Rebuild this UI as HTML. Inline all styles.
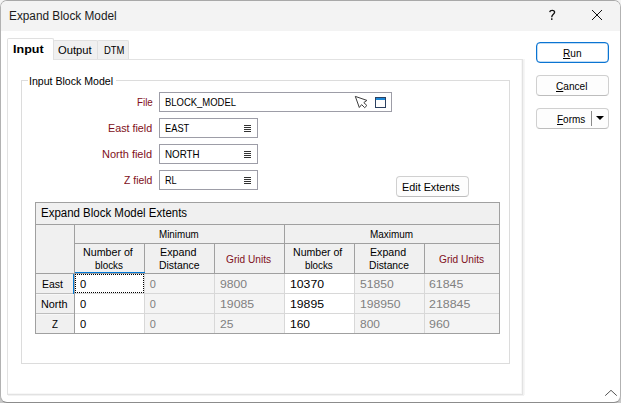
<!DOCTYPE html>
<html><head><meta charset="utf-8"><title>Expand Block Model</title>
<style>
html,body{margin:0;padding:0;}
body{width:621px;height:403px;overflow:hidden;background:linear-gradient(#f4f4f4 0,#f4f4f4 50%,#c8c8c8 100%);position:relative;font-family:"Liberation Sans",sans-serif;font-size:11px;color:#000;}
.abs,#win *{position:absolute;box-sizing:border-box;}
#win{position:absolute;box-sizing:border-box;left:0;top:0;width:621px;height:403px;border:1px solid #b2b2b2;border-top-color:#a8a8a8;border-bottom-color:#8c8c8c;border-radius:7px;background:#fff;overflow:hidden;}
#titlebar{left:0;top:0;width:619px;height:30px;background:#f3f3f3;}
/* tab control */
#page{left:6px;top:58px;width:516px;height:336px;background:#fff;border:1px solid #e2e2e2;box-shadow:1px 1px 0 #f2f2f2,2px 0 0 #f6f6f6,inset -1px -1px 0 #f7f7f7;}
.tab{background:#f0f0f0;border:1px solid #e0e0e0;border-bottom:none;border-radius:2px 2px 0 0;}
#tab1{left:6px;top:37px;width:47px;height:22px;background:#fff;border-color:#e0e0e0;border-radius:2px 2px 0 0;}
#tab2{left:52px;top:39px;width:45px;height:20px;}
#tab3{left:96px;top:39px;width:32px;height:20px;}
/* group box */
#grp{left:20px;top:79px;width:489px;height:284px;border:1px solid #dcdcdc;}
#grplabel{left:27px;top:73px;width:88px;height:14px;background:#fff;}
/* inputs */
.inp{background:#fff;border:1px solid #9d9da7;height:20px;}
#f1{left:158px;top:91px;width:233px;}
#f2{left:158px;top:117px;width:99px;}
#f3{left:158px;top:143px;width:99px;}
#f4{left:158px;top:169px;width:99px;}
.lst{width:7px;height:7px;left:83.6px;top:6px;}
/* buttons */
.btn{background:#fdfdfd;border:1px solid #d0d0d0;border-bottom-color:#bdbdbd;border-radius:4px;}
#bedit{left:395px;top:175px;width:73px;height:21px;}
#brun{left:535px;top:41px;width:73px;height:21px;border:1px solid #0a74d2;box-shadow:inset 0 0 0 0.25px #0a74d2;background:#fff;}
#bcancel{left:535px;top:74px;width:73px;height:21px;}
#bforms{left:535px;top:107px;width:73px;height:21px;}
#fdiv{left:54px;top:2px;width:1px;height:15px;background:#8a8a8a;}
/* grid */
#grid{left:34px;top:201px;width:465px;height:132px;background:#f0f0f0;border:1px solid #a0a0a0;}
.hl{background:#a0a0a0;height:1px;}
.vl{background:#a0a0a0;width:1px;}
.hl2{background:#d8d8d8;height:1px;}
.vl2{background:#d8d8d8;width:1px;}
.cellw{background:#fff;}
.blue{background:#0078d7;}
#focus{border:1px dotted #000;}
/* text */
#texts{position:absolute;left:0;top:0;width:621px;height:403px;pointer-events:none;}
.t{position:absolute;white-space:nowrap;transform-origin:0 0;line-height:normal;}
.t u{text-decoration:underline;text-underline-offset:1px;}
svg{position:absolute;overflow:visible;}

</style></head>
<body>
<div id="win">
  <div id="titlebar"></div>
  <!-- help & close glyphs -->
  <svg style="left:590px;top:8px" width="12" height="12" viewBox="0 0 12 12"><path d="M1 1 L11 11 M11 1 L1 11" stroke="#111" stroke-width="1.0" fill="none"/></svg>
  <svg style="left:545px;top:7px" width="12" height="14" viewBox="0 0 12 14"><path d="M3.7 4.1 C3.9 2.9 5.0 2.4 6.2 2.4 C7.7 2.4 8.6 3.2 8.6 4.3 C8.6 5.2 7.9 5.9 7.1 6.6 C6.2 7.4 5.75 7.9 5.75 9.3" stroke="#111" stroke-width="1.35" fill="none"/><rect x="5.0" y="10.3" width="1.5" height="1.6" fill="#111"/></svg>

  <!-- tabs -->
  <div id="tab2" class="tab"></div>
  <div id="tab3" class="tab"></div>
  <div id="page"></div>
  <div id="tab1" class="tab"></div>

  <!-- group box -->
  <div id="grp"></div>
  <div id="grplabel"></div>

  <!-- inputs -->
  <div id="f1" class="inp">
    <svg style="left:194px;top:2px" width="14" height="14" viewBox="0 0 14 14"><path d="M1.3 1.4 L12.9 5.4 L9.8 7.6 L12.9 10.5 L10.7 12.7 L7.6 9.6 L5.3 12.5 Z" fill="#fff" stroke="#3c3c3c" stroke-width="1"/></svg>
    <svg style="left:215px;top:4px" width="12" height="12" viewBox="0 0 12 12"><rect x="0.5" y="0.5" width="10" height="10" fill="#fdfdfd" stroke="#2b4060" stroke-width="1"/><rect x="1" y="1" width="9" height="2" fill="#1e88d6"/></svg>
  </div>
  <div id="f2" class="inp"><svg class="lst" viewBox="0 0 7 7"><path d="M0 0.5H7M0 2.5H7M0 4.5H7M0 6.5H7" stroke="#333" stroke-width="1"/></svg></div>
  <div id="f3" class="inp"><svg class="lst" viewBox="0 0 7 7"><path d="M0 0.5H7M0 2.5H7M0 4.5H7M0 6.5H7" stroke="#333" stroke-width="1"/></svg></div>
  <div id="f4" class="inp"><svg class="lst" viewBox="0 0 7 7"><path d="M0 0.5H7M0 2.5H7M0 4.5H7M0 6.5H7" stroke="#333" stroke-width="1"/></svg></div>

  <!-- buttons -->
  <div id="bedit" class="btn"></div>
  <div id="brun" class="btn"></div>
  <div id="bcancel" class="btn"></div>
  <div id="bforms" class="btn"><div id="fdiv"></div>
    <svg style="left:59px;top:7px" width="8" height="4" viewBox="0 0 8 4"><path d="M0 0H8L4 4Z" fill="#000"/></svg>
  </div>

  <!-- grid : coordinates relative to #grid's padding box (origin = page 35,202) -->
  <div id="grid">
    <!-- data area (disabled look) -->
    <div style="left:39px;top:71px;width:424px;height:59px;background:#f4f4f4"></div>
    <!-- white editable cells -->
    <div class="cellw" style="left:39px;top:71px;width:69px;height:59px"></div>
    <div class="cellw" style="left:249px;top:71px;width:69px;height:59px"></div>
    <!-- header lines -->
    <div class="hl" style="left:0;top:21px;width:463px"></div>
    <div class="hl" style="left:38px;top:40px;width:425px"></div>
    <div class="hl" style="left:0;top:70px;width:463px"></div>
    <div class="vl" style="left:38px;top:22px;height:108px"></div>
    <div class="vl" style="left:248px;top:22px;height:48px"></div>
    <div class="vl" style="left:108px;top:41px;height:29px"></div>
    <div class="vl" style="left:178px;top:41px;height:29px"></div>
    <div class="vl" style="left:318px;top:41px;height:29px"></div>
    <div class="vl" style="left:388px;top:41px;height:29px"></div>
    <!-- row header separators -->
    <div class="hl" style="left:0;top:90px;width:38px;background:#bdbdbd;box-shadow:0 1px 0 #f7f7f7"></div>
    <div class="hl" style="left:0;top:110px;width:38px;background:#bdbdbd;box-shadow:0 1px 0 #f7f7f7"></div>
    <!-- data lines -->
    <div class="hl2" style="left:39px;top:90px;width:424px"></div>
    <div class="hl2" style="left:39px;top:110px;width:424px"></div>
    <div class="vl2" style="left:108px;top:71px;height:59px"></div>
    <div class="vl2" style="left:178px;top:71px;height:59px"></div>
    <div class="vl2" style="left:248px;top:71px;height:59px"></div>
    <div class="vl2" style="left:318px;top:71px;height:59px"></div>
    <div class="vl2" style="left:388px;top:71px;height:59px"></div>
    <!-- selection highlights -->
    <div class="blue" style="left:39px;top:69px;width:70px;height:1px"></div>
    <div class="blue" style="left:37px;top:71px;width:1px;height:20px"></div>
    <div id="focus" style="left:39px;top:71px;width:69px;height:19px"></div>
  </div>

  <!-- resize caret bottom right -->
  <svg style="left:603px;top:388px" width="14" height="8" viewBox="0 0 14 8"><path d="M1.2 6.7 L7 1.3 L12.8 6.7" stroke="#555" stroke-width="1" fill="none"/></svg>
</div>

<div id="texts">
<span class="t" style="left:9.40px;top:9.0px;font-size:12px;color:#1b1b1b;transform:scaleX(0.9841);">Expand Block Model</span>
<span class="t" style="left:13.00px;top:43.0px;font-size:11px;color:#000;transform:scaleX(1.1391);font-weight:bold;">Input</span>
<span class="t" style="left:58.00px;top:44.0px;font-size:11px;color:#000;transform:scaleX(1.0162);">Output</span>
<span class="t" style="left:104.00px;top:44.0px;font-size:11px;color:#000;transform:scaleX(0.8579);">DTM</span>
<span class="t" style="left:29.04px;top:75.0px;font-size:11px;color:#000;transform:scaleX(0.9617);">Input Block Model</span>
<span class="t" style="left:136.50px;top:96.0px;font-size:11px;color:#800f20;transform:scaleX(0.8917);">File</span>
<span class="t" style="left:108.10px;top:122.0px;font-size:11px;color:#800f20;transform:scaleX(0.9772);">East field</span>
<span class="t" style="left:102.30px;top:148.0px;font-size:11px;color:#800f20;transform:scaleX(0.9977);">North field</span>
<span class="t" style="left:124.00px;top:174.0px;font-size:11px;color:#800f20;transform:scaleX(0.9451);">Z field</span>
<span class="t" style="left:164.70px;top:96.0px;font-size:11px;color:#000;transform:scaleX(0.8603);">BLOCK_MODEL</span>
<span class="t" style="left:164.60px;top:122.0px;font-size:11px;color:#000;transform:scaleX(0.8445);">EAST</span>
<span class="t" style="left:164.60px;top:148.0px;font-size:11px;color:#000;transform:scaleX(0.8906);">NORTH</span>
<span class="t" style="left:164.60px;top:174.0px;font-size:11px;color:#000;transform:scaleX(0.8319);">RL</span>
<span class="t" style="left:402.20px;top:181.0px;font-size:11px;color:#000;transform:scaleX(0.9832);">Edit Extents</span>
<span class="t" style="left:562.90px;top:47.0px;font-size:11px;color:#000;transform:scaleX(0.9172);"><u>R</u>un</span>
<span class="t" style="left:556.00px;top:80.0px;font-size:11px;color:#000;transform:scaleX(0.9172);"><u>C</u>ancel</span>
<span class="t" style="left:556.90px;top:113.0px;font-size:11px;color:#000;transform:scaleX(0.9064);"><u>F</u>orms</span>
<span class="t" style="left:40.60px;top:206.0px;font-size:12px;color:#000;transform:scaleX(0.9565);">Expand Block Model Extents</span>
<span class="t" style="left:158.60px;top:228.0px;font-size:11px;color:#000;transform:scaleX(0.8909);">Minimum</span>
<span class="t" style="left:369.90px;top:228.0px;font-size:11px;color:#000;transform:scaleX(0.9052);">Maximum</span>
<span class="t" style="left:83.20px;top:246.0px;font-size:11px;color:#000;transform:scaleX(0.9695);">Number of</span>
<span class="t" style="left:95.00px;top:259.0px;font-size:11px;color:#000;transform:scaleX(0.8965);">blocks</span>
<span class="t" style="left:160.00px;top:246.0px;font-size:11px;color:#000;transform:scaleX(0.9761);">Expand</span>
<span class="t" style="left:158.80px;top:259.0px;font-size:11px;color:#000;transform:scaleX(0.9466);">Distance</span>
<span class="t" style="left:225.70px;top:253.0px;font-size:11px;color:#800f20;transform:scaleX(0.9211);">Grid Units</span>
<span class="t" style="left:293.30px;top:246.0px;font-size:11px;color:#000;transform:scaleX(0.9599);">Number of</span>
<span class="t" style="left:304.90px;top:259.0px;font-size:11px;color:#000;transform:scaleX(0.8902);">blocks</span>
<span class="t" style="left:370.30px;top:246.0px;font-size:11px;color:#000;transform:scaleX(0.9680);">Expand</span>
<span class="t" style="left:368.90px;top:259.0px;font-size:11px;color:#000;transform:scaleX(0.9325);">Distance</span>
<span class="t" style="left:438.60px;top:253.0px;font-size:11px;color:#800f20;transform:scaleX(0.9231);">Grid Units</span>
<span class="t" style="left:42.20px;top:278.0px;font-size:11px;color:#000;transform:scaleX(0.9520);">East</span>
<span class="t" style="left:40.50px;top:298.0px;font-size:11px;color:#000;transform:scaleX(0.9858);">North</span>
<span class="t" style="left:51.70px;top:318.0px;font-size:11px;color:#000;transform:scaleX(0.8857);">Z</span>
<span class="t" style="left:80.00px;top:278.0px;font-size:11px;color:#000;transform:scaleX(1.0167);">0</span>
<span class="t" style="left:80.00px;top:298.0px;font-size:11px;color:#000;transform:scaleX(1.0167);">0</span>
<span class="t" style="left:80.00px;top:318.0px;font-size:11px;color:#000;transform:scaleX(1.0167);">0</span>
<span class="t" style="left:149.70px;top:278.0px;font-size:11px;color:#808080;transform:scaleX(1.0000);">0</span>
<span class="t" style="left:149.70px;top:298.0px;font-size:11px;color:#808080;transform:scaleX(1.0000);">0</span>
<span class="t" style="left:149.70px;top:318.0px;font-size:11px;color:#808080;transform:scaleX(1.0000);">0</span>
<span class="t" style="left:219.50px;top:278.0px;font-size:11px;color:#808080;transform:scaleX(1.1087);">9800</span>
<span class="t" style="left:219.50px;top:298.0px;font-size:11px;color:#808080;transform:scaleX(1.1158);">19085</span>
<span class="t" style="left:219.50px;top:318.0px;font-size:11px;color:#808080;transform:scaleX(1.0976);">25</span>
<span class="t" style="left:289.80px;top:278.0px;font-size:11px;color:#000;transform:scaleX(1.1125);">10370</span>
<span class="t" style="left:289.80px;top:298.0px;font-size:11px;color:#000;transform:scaleX(1.1125);">19895</span>
<span class="t" style="left:289.80px;top:318.0px;font-size:11px;color:#000;transform:scaleX(1.0913);">160</span>
<span class="t" style="left:359.50px;top:278.0px;font-size:11px;color:#808080;transform:scaleX(1.0994);">51850</span>
<span class="t" style="left:359.50px;top:298.0px;font-size:11px;color:#808080;transform:scaleX(1.1069);">198950</span>
<span class="t" style="left:359.50px;top:318.0px;font-size:11px;color:#808080;transform:scaleX(1.0858);">800</span>
<span class="t" style="left:429.40px;top:278.0px;font-size:11px;color:#808080;transform:scaleX(1.1224);">61845</span>
<span class="t" style="left:429.40px;top:298.0px;font-size:11px;color:#808080;transform:scaleX(1.1260);">218845</span>
<span class="t" style="left:429.40px;top:318.0px;font-size:11px;color:#808080;transform:scaleX(1.1297);">960</span>
</div>
</body></html>
